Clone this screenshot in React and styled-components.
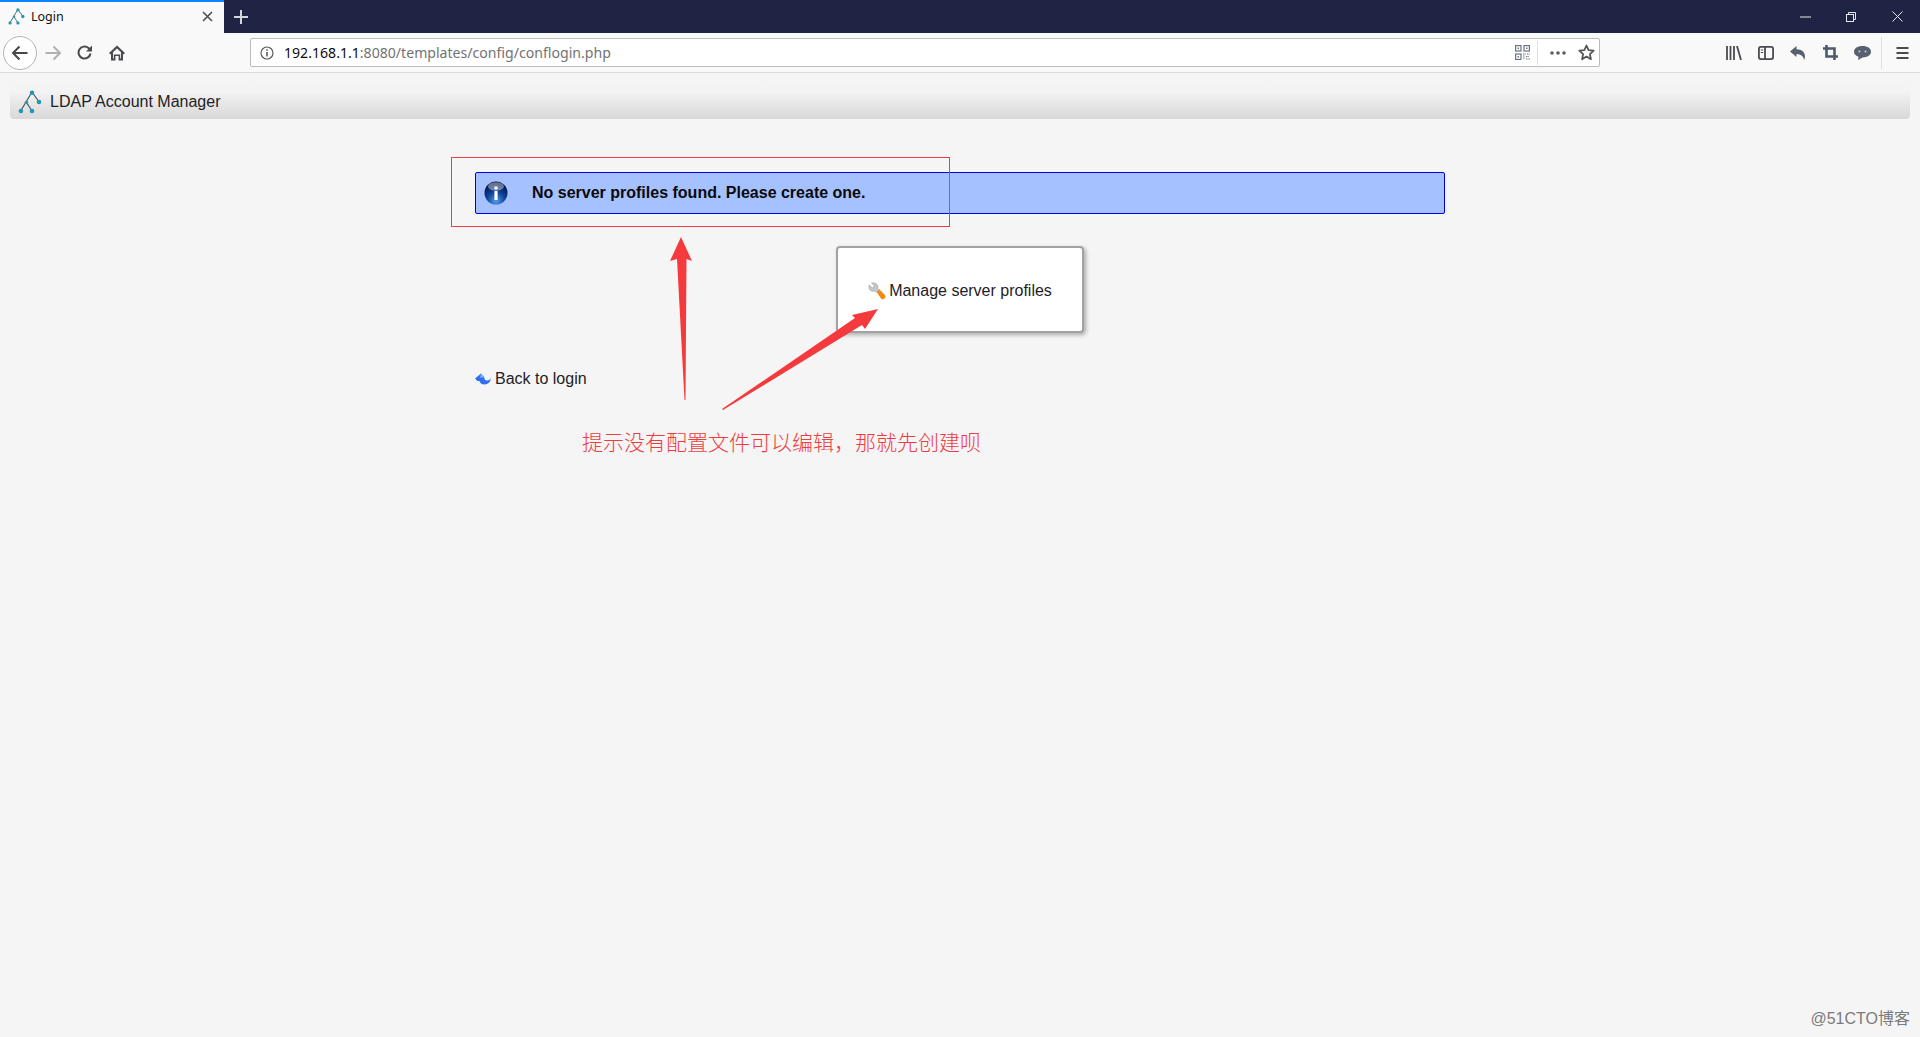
import styled, { createGlobalStyle } from "styled-components"

const GlobalStyle = createGlobalStyle`
    html, body {
        margin : 0;
        padding : 0;
        background-color : #f5f5f5;
    }
    #root {
        min-height : 1037px;
    }
`

const Page = styled.div`
    position : relative;
    width : 1920px;
    height : 1037px;
    overflow : hidden;
    background-color : #f5f5f5;
    font-family : "Liberation Sans", Arial, sans-serif;
    color : #1e2226;
`

/* browser chrome */
const TabBar = styled.div`
    height : 33px;
    display : flex;
    align-items : stretch;
    background-color : #1f2344;
`

const Tab = styled.div`
    width : 224px;
    box-sizing : border-box;
    border-top : 2px solid #0a84ff;
    background-color : #f9f9fa;
    display : flex;
    align-items : center;
    padding : 0 11px 2px 8px;
    font-family : "Noto Sans", sans-serif;
    font-size : 12.5px;
    color : #111;
`

const TabTitle = styled.span`
    margin-left : 6px;
    flex : 1;
`

const NewTab = styled.div`
    width : 34px;
    display : flex;
    align-items : center;
    justify-content : center;
`

const WindowControls = styled.div`
    margin-left : auto;
    display : flex;
    align-items : center;
`

const WindowButton = styled.div`
    width : 46px;
    height : 33px;
    display : flex;
    align-items : center;
    justify-content : center;
`

const Toolbar = styled.div`
    height : 40px;
    box-sizing : border-box;
    display : flex;
    align-items : center;
    padding-left : 3px;
    background-color : #f9f9fa;
    border-bottom : 1px solid #dcdcde;
`

const BackButton = styled.div`
    width : 34px;
    height : 34px;
    box-sizing : border-box;
    border : 1px solid #b4b4b4;
    border-radius : 50%;
    background-color : #fff;
    display : flex;
    align-items : center;
    justify-content : center;
    flex-shrink : 0;
`

const ToolButton = styled.div`
    width : ${(p) => p.$width || 32}px;
    height : 32px;
    display : flex;
    align-items : center;
    justify-content : center;
    flex-shrink : 0;
`

const UrlBar = styled.div`
    width : 1350px;
    height : 29px;
    margin-left : 117px;
    box-sizing : border-box;
    border : 1px solid #bcbcbc;
    border-radius : 2px;
    background-color : #fff;
    display : flex;
    align-items : center;
    flex-shrink : 0;
    padding-left : 9px;
`

const UrlText = styled.div`
    margin-left : 10px;
    flex : 1;
    font-family : "Noto Sans", sans-serif;
    font-size : 14.1px;
    color : #737373;
    white-space : nowrap;
`

const UrlHost = styled.span`
    color : #0c0c0d;
`

const UrlDivider = styled.div`
    width : 1px;
    height : 24px;
    background-color : #e1e1e2;
    margin : 0 5px 0 6px;
`

const ToolGroup = styled.div`
    margin-left : 118px;
    display : flex;
    align-items : center;
`

const ToolDivider = styled.div`
    width : 1px;
    height : 32px;
    background-color : #dedee0;
    margin : 0 3px;
`

/* LAM page */
const Header = styled.div`
    height : 46px;
    margin : 0 10px;
    box-sizing : border-box;
    padding : 12px 0 0 8px;
    display : flex;
    align-items : center;
    gap : 8px;
    font-size : 16px;
    border-radius : 0 0 4px 4px;
    background : linear-gradient(to bottom, #f6f6f6 0%, #f3f3f3 40%, #d8d8d8 100%);
`

const Content = styled.div`
    width : 970px;
    margin-left : 475px;
    padding-top : 53px;
`

const Alert = styled.div`
    height : 42px;
    box-sizing : border-box;
    border : 1px solid #0000e6;
    border-radius : 2px;
    background-color : #a6c1ff;
    display : flex;
    align-items : center;
    padding-left : 8px;
    font-size : 16px;
    font-weight : bold;
    color : #0a0a0a;
`

const AlertText = styled.div`
    margin-left : 24px;
`

const Card = styled.div`
    width : 248px;
    height : 87px;
    margin : 32px auto 0;
    box-sizing : border-box;
    border : 2px solid #a2a2a2;
    border-radius : 4px;
    padding-top : 3px;
    background-color : #fff;
    box-shadow : 2px 2px 4px rgba(0, 0, 0, 0.3);
    display : flex;
    align-items : center;
    justify-content : center;
    gap : 3px;
    font-size : 16px;
`

const BackLink = styled.div`
    margin-top : 36px;
    height : 20px;
    display : flex;
    align-items : center;
    gap : 4px;
    font-size : 16px;
`

/* annotations lying over the screenshot */
const RedFrame = styled.div`
    position : absolute;
    left : 451px;
    top : 157px;
    width : 499px;
    height : 70px;
    box-sizing : border-box;
    border : 1px solid #f43c42;
`

const ArrowLayer = styled.svg`
    position : absolute;
    left : 0;
    top : 0;
`

const Annotation = styled.div`
    position : absolute;
    left : 582px;
    top : 428px;
    font-family : "Liberation Serif", "Noto Sans CJK SC", serif;
    font-size : 21px;
    font-weight : 300;
    line-height : 30px;
    white-space : nowrap;
    color : #f23a40;
`

const Watermark = styled.div`
    position : absolute;
    right : 10px;
    top : 1009px;
    font-family : "Liberation Sans", "Noto Sans CJK SC", sans-serif;
    font-size : 16px;
    line-height : 20px;
    color : #7a7a7a;
    white-space : nowrap;
`

const LamLogo = ({ size = 24 }) => (
    <svg width={size} height={size} viewBox="0 0 24 24">
        <g stroke="#4a5560" strokeWidth="1.2" fill="none">
            <path d="M14 2 L2.6 21 M14 2 L21 12 M8.5 12.5 L14 21" />
        </g>
        <g fill="#2497b8">
            <circle cx="14" cy="2.8" r="2.3" />
            <circle cx="21" cy="12" r="2.3" />
            <circle cx="8.5" cy="12.5" r="1.8" />
            <circle cx="2.9" cy="21" r="2.3" />
            <circle cx="14" cy="21" r="2.3" />
        </g>
    </svg>
)

const InfoIcon = () => (
    <svg width="24" height="24" viewBox="0 0 24 24">
        <defs>
            <radialGradient id="infoBall" cx="50%" cy="85%" r="75%">
                <stop offset="0%" stopColor="#4f9bec" />
                <stop offset="55%" stopColor="#0d3f96" />
                <stop offset="100%" stopColor="#03184a" />
            </radialGradient>
        </defs>
        <circle cx="12" cy="12" r="11.5" fill="url(#infoBall)" />
        <ellipse cx="12" cy="5.5" rx="8" ry="4.2" fill="#ffffff" opacity="0.4" />
        <rect x="10.4" y="10" width="3.2" height="9" fill="#fff" />
        <circle cx="12" cy="7" r="1.8" fill="#fff" />
    </svg>
)

const WrenchIcon = () => (
    <svg width="18" height="18" viewBox="0 0 18 18">
        <path d="M8 9 L11 7 L17 13 Q18 15 16.5 16.5 Q15 18 13 16.5 Z" fill="#f08a12" />
        <path d="M1 3 L4 6 L6 5 L6 3 L3.5 1 Q7 0 9 2.5 Q10.5 4.5 9.5 7 L11 8.5 L8.5 10.5 L7 9 Q4 10 2 8 Q0.5 6 1 3 Z" fill="#c4c8cc" stroke="#8c9096" strokeWidth="0.5" />
    </svg>
)

const BackArrowIcon = () => (
    <svg width="16" height="12" viewBox="0 0 16 12">
        <path d="M0 5.5 L6 0.5 L9 4 Q9.5 7.5 12 7.5 Q14.5 7.5 16 5 Q15 11 9.5 11.5 Q5.5 11.5 4.5 8 L2.5 8 Z" fill="#2f6ff0" />
        <path d="M6 0.5 L9 4 L5 5 Z" fill="#7db0ff" />
    </svg>
)

const ArrowIcon = ({ color, flip }) => (
    <svg width="18" height="16" viewBox="0 0 18 16" fill="none" stroke={color} strokeWidth="2" style={flip ? { transform: "scaleX(-1)" } : undefined}>
        <path d="M16.5 8 H2 M8.5 1.5 L2 8 L8.5 14.5" />
    </svg>
)

const ReloadIcon = () => (
    <svg width="16" height="16" viewBox="0 0 16 16" fill="none" stroke="#4a4a4f" strokeWidth="2">
        <path d="M13.5 8.5 A6 6 0 1 1 11.5 3 L14 5" />
        <path d="M15 0.5 V6.5 H9" fill="#4a4a4f" stroke="none" />
    </svg>
)

const HomeIcon = () => (
    <svg width="16" height="16" viewBox="0 0 16 16" fill="#4a4a4f">
        <path d="M8 0.5 L16 8 L14.6 9.4 L14 8.8 V15.5 H9.6 V11 H6.4 V15.5 H2 V8.8 L1.4 9.4 L0 8 Z M4 7.2 V13.6 H4.8 V9.4 H11.2 V13.6 H12 V7.2 L8 3.4 Z" fillRule="evenodd" />
    </svg>
)

const InfoOutline = () => (
    <svg width="14" height="14" viewBox="0 0 14 14" fill="none" stroke="#5a5a5e">
        <circle cx="7" cy="7" r="6" strokeWidth="1.2" />
        <path d="M7 6 V10.5" strokeWidth="1.6" />
        <path d="M7 3.2 V4.8" strokeWidth="1.6" />
    </svg>
)

const QrIcon = () => (
    <svg width="15" height="15" viewBox="0 0 15 15" fill="none" stroke="#6b7480" strokeWidth="1.2">
        <rect x="0.6" y="0.6" width="5.4" height="5.4" />
        <rect x="9" y="0.6" width="5.4" height="5.4" />
        <rect x="0.6" y="9" width="5.4" height="5.4" />
        <path d="M8 9 H11 M12 9 H15 M8 11 H10 M11 11.5 H14 M8 13 H10 M11 14 H15" strokeDasharray="1.5 0.8" />
        <rect x="2.5" y="2.5" width="1.5" height="1.5" fill="#6b7480" stroke="none" />
        <rect x="11" y="2.5" width="1.5" height="1.5" fill="#6b7480" stroke="none" />
        <rect x="2.5" y="11" width="1.5" height="1.5" fill="#6b7480" stroke="none" />
    </svg>
)

const DotsIcon = () => (
    <svg width="16" height="4" viewBox="0 0 16 4" fill="#5c5c61">
        <circle cx="2" cy="2" r="1.8" />
        <circle cx="8" cy="2" r="1.8" />
        <circle cx="14" cy="2" r="1.8" />
    </svg>
)

const StarIcon = () => (
    <svg width="17" height="17" viewBox="0 0 17 17" fill="none" stroke="#55555a" strokeWidth="1.8" strokeLinejoin="round">
        <path d="M8.5 1.5 L10.6 6.1 L15.7 6.7 L11.9 10.1 L12.9 15.2 L8.5 12.6 L4.1 15.2 L5.1 10.1 L1.3 6.7 L6.4 6.1 Z" />
    </svg>
)

const LibraryIcon = () => (
    <svg width="16" height="14" viewBox="0 0 16 14" fill="none" stroke="#4a4a4f" strokeWidth="1.8">
        <path d="M1 0 V14 M4.5 0 V14 M8 0 V14 M11 0 L15 14" />
    </svg>
)

const SidebarIcon = () => (
    <svg width="16" height="14" viewBox="0 0 16 14" fill="none" stroke="#4a4a4f">
        <rect x="0.9" y="0.9" width="14.2" height="12.2" rx="2" strokeWidth="1.8" />
        <path d="M7 1 V13" strokeWidth="1.8" />
        <path d="M2.8 4 H5.2 M2.8 6.5 H5.2" strokeWidth="1.2" />
    </svg>
)

const UndoIcon = () => (
    <svg width="16" height="14" viewBox="0 0 16 14" fill="#56606e">
        <path d="M0 5.5 L6.5 0 V3.2 Q15 3.5 15 11 Q15 12.5 14 14 Q13.5 8.5 6.5 8 V11 Z" />
    </svg>
)

const CropIcon = () => (
    <svg width="15" height="15" viewBox="0 0 15 15" fill="none" stroke="#4f5a6a" strokeWidth="2.6">
        <path d="M3.5 0 V11.5 H15 M0 3.5 H11.5 V15" />
    </svg>
)

const ChatIcon = () => (
    <svg width="17" height="14" viewBox="0 0 17 14">
        <path d="M8.5 0 C13.5 0 17 2.4 17 5.8 C17 9.2 13.5 11.4 8.5 11.4 L4 14 L4.6 10.8 C1.8 10 0 8.2 0 5.8 C0 2.4 3.5 0 8.5 0 Z" fill="#56606e" />
        <circle cx="5.5" cy="5.5" r="1" fill="#c9ced4" />
        <circle cx="11.5" cy="5.5" r="1" fill="#c9ced4" />
    </svg>
)

const MenuIcon = () => (
    <svg width="13" height="12" viewBox="0 0 13 12" fill="none" stroke="#4a4a4f" strokeWidth="2">
        <path d="M0.5 1 H12.5 M0.5 6 H12.5 M0.5 11 H12.5" />
    </svg>
)

const CloseTabIcon = () => (
    <svg width="11" height="11" viewBox="0 0 11 11" stroke="#4e4e52" strokeWidth="1.6">
        <path d="M1 1 L10 10 M10 1 L1 10" />
    </svg>
)

const PlusIcon = () => (
    <svg width="14" height="14" viewBox="0 0 14 14" stroke="#d4d5dc" strokeWidth="2">
        <path d="M7 0 V14 M0 7 H14" />
    </svg>
)

const MinimizeIcon = () => (
    <svg width="11" height="2" viewBox="0 0 11 2" stroke="#e8e8ee">
        <path d="M0 1 H11" />
    </svg>
)

const RestoreIcon = () => (
    <svg width="10" height="10" viewBox="0 0 10 10" fill="none" stroke="#e8e8ee">
        <rect x="0.5" y="2.5" width="7" height="7" />
        <path d="M2.5 2.5 V0.5 H9.5 V7.5 H7.5" />
    </svg>
)

const CloseWindowIcon = () => (
    <svg width="11" height="11" viewBox="0 0 11 11" stroke="#e8e8ee">
        <path d="M0.5 0.5 L10.5 10.5 M10.5 0.5 L0.5 10.5" />
    </svg>
)

const App = () => {
    return (
        <Page>
            <GlobalStyle />
            <TabBar>
                <Tab>
                    <LamLogo size={17} />
                    <TabTitle>Login</TabTitle>
                    <CloseTabIcon />
                </Tab>
                <NewTab>
                    <PlusIcon />
                </NewTab>
                <WindowControls>
                    <WindowButton><MinimizeIcon /></WindowButton>
                    <WindowButton><RestoreIcon /></WindowButton>
                    <WindowButton><CloseWindowIcon /></WindowButton>
                </WindowControls>
            </TabBar>
            <Toolbar>
                <BackButton>
                    <ArrowIcon color="#47474c" />
                </BackButton>
                <ToolButton><ArrowIcon color="#b1b1b3" flip /></ToolButton>
                <ToolButton><ReloadIcon /></ToolButton>
                <ToolButton><HomeIcon /></ToolButton>
                <UrlBar>
                    <InfoOutline />
                    <UrlText>
                        <UrlHost>192.168.1.1</UrlHost>:8080/templates/config/conflogin.php
                    </UrlText>
                    <ToolButton $width={18}><QrIcon /></ToolButton>
                    <UrlDivider />
                    <ToolButton $width={30}><DotsIcon /></ToolButton>
                    <ToolButton $width={26}><StarIcon /></ToolButton>
                </UrlBar>
                <ToolGroup>
                    <ToolButton><LibraryIcon /></ToolButton>
                    <ToolButton><SidebarIcon /></ToolButton>
                    <ToolButton><UndoIcon /></ToolButton>
                    <ToolButton><CropIcon /></ToolButton>
                    <ToolButton><ChatIcon /></ToolButton>
                    <ToolDivider />
                    <ToolButton $width={35}><MenuIcon /></ToolButton>
                </ToolGroup>
            </Toolbar>
            <Header>
                <LamLogo />
                LDAP Account Manager
            </Header>
            <Content>
                <Alert>
                    <InfoIcon />
                    <AlertText>No server profiles found. Please create one.</AlertText>
                </Alert>
                <Card>
                    <WrenchIcon />
                    Manage server profiles
                </Card>
                <BackLink>
                    <BackArrowIcon />
                    Back to login
                </BackLink>
            </Content>
            <RedFrame />
            <ArrowLayer width="1920" height="1037" viewBox="0 0 1920 1037">
                <polygon points="681,237 692,261 686.5,259 685.5,400 684.5,400 677,259 670,261" fill="#f53a3e" />
                <polygon points="878,309 865,329 862,325 723,410 722,409 855,318 852,315" fill="#f53a3e" />
            </ArrowLayer>
            <Annotation>{"提示没有配置文件可以编辑\uFF0C那就先创建呗"}</Annotation>
            <Watermark>@51CTO博客</Watermark>
        </Page>
    )
}

export default App
